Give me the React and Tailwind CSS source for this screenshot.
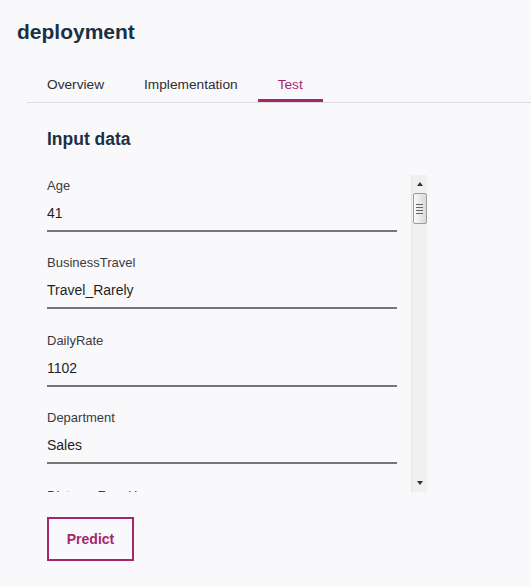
import React from 'react';

const fields = [
  { label: 'Age', value: '41' },
  { label: 'BusinessTravel', value: 'Travel_Rarely' },
  { label: 'DailyRate', value: '1102' },
  { label: 'Department', value: 'Sales' },
  { label: 'DistanceFromHome', value: '1' },
  { label: 'Education', value: '2' },
];

const tabs = ['Overview', 'Implementation', 'Test'];

function ScrollBar() {
  return (
    <div className="flex h-full w-[16px] flex-col items-center border-l border-[#e6e6e6] bg-[#f0f0f0]">
      <svg width="8" height="17" viewBox="0 0 8 17" className="mt-[1px]">
        <path d="M1 10 L4 6 L7 10 Z" fill="#333" />
      </svg>
      <div className="flex h-[31px] w-[14px] flex-col items-center justify-center gap-[2px] rounded-[2px] border border-[#9c9c9c] bg-gradient-to-r from-[#fafafa] to-[#d9d9d9]">
        <div className="h-px w-[7px] bg-[#666]" />
        <div className="h-px w-[7px] bg-[#666]" />
        <div className="h-px w-[7px] bg-[#666]" />
        <div className="h-px w-[7px] bg-[#666]" />
      </div>
      <div className="flex-1" />
      <svg width="8" height="16" viewBox="0 0 8 16" className="mb-[1px]">
        <path d="M1 6 L4 10 L7 6 Z" fill="#333" />
      </svg>
    </div>
  );
}

export default function App() {
  return (
    <div className="min-h-screen bg-[#f9f9fb] font-['Liberation_Sans',Arial,sans-serif] text-[#1f2d3d]">
      <h1 className="pl-[17px] pt-[18px] text-[21px] font-bold leading-[28px] text-[#1c3044]">deployment</h1>

      {/* tabs */}
      <div className="ml-[27px] mt-[26px] flex border-b border-[#dcdcdf]">
        {tabs.map((t) => (
          <div
            key={t}
            className={
              t === 'Test'
                ? 'border-b-[3px] border-[#a6266e] px-5 pb-[4px] pt-[3px] text-[13.7px] leading-[20px] text-[#a6266e]'
                : 'border-b-[3px] border-transparent px-5 pb-[4px] pt-[3px] text-[13.7px] leading-[20px] text-[#2e2e33]'
            }
          >
            {t}
          </div>
        ))}
      </div>

      <div className="pl-[47px]">
        <h2 className="mt-[25px] text-[17.5px] font-bold leading-[22px] text-[#1c3044]">Input data</h2>

        <div className="mt-[25px] flex h-[317px] w-[380px]">
          <div className="w-[364px] overflow-hidden">
            {fields.map((f) => (
              <div key={f.label} className="w-[350px] pt-[3px] pb-[20.4px]">
                <div className="text-[13px] leading-[16px] text-[#3a3a40]">{f.label}</div>
                <div className="mt-[10px] border-b-2 border-[#777777] pb-[8px] text-[14px] leading-[18px] text-[#1f1f24]">
                  {f.value}
                </div>
              </div>
            ))}
          </div>
          <ScrollBar />
        </div>

        <button className="mt-[25px] h-[44px] w-[87px] border-2 border-[#a6266e] text-[14px] font-semibold text-[#a6266e]">
          Predict
        </button>
      </div>
    </div>
  );
}
